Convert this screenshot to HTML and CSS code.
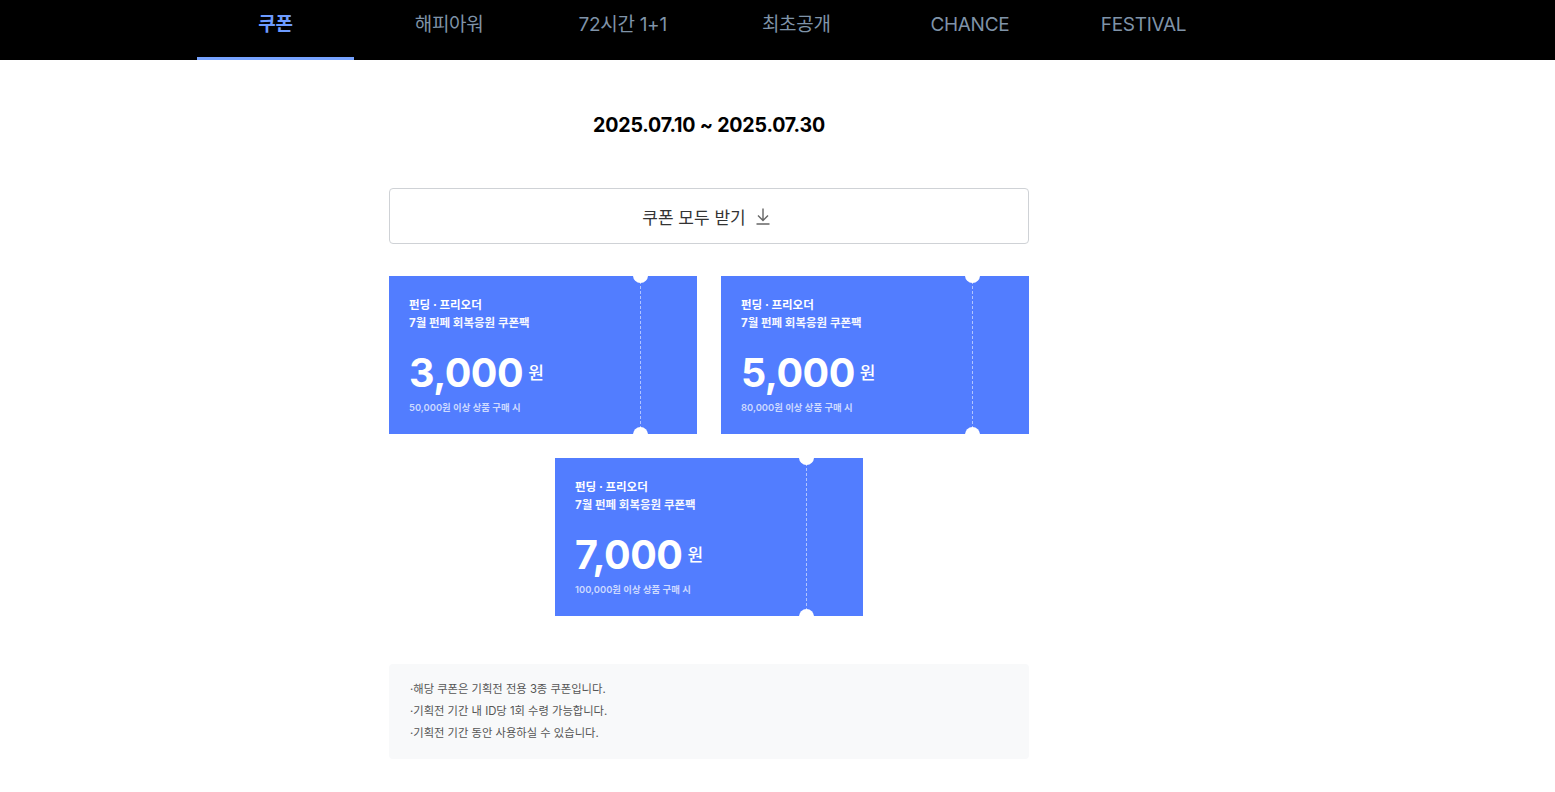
FILE: index.html
```html
<!DOCTYPE html>
<html lang="ko">
<head>
<meta charset="utf-8">
<link rel="stylesheet" href="styles.css">
</head>
<body>
<nav class="nav">
  <div class="nav-inner">
    <a class="nav-item active">쿠폰</a>
    <a class="nav-item">해피아워</a>
    <a class="nav-item">72시간 1+1</a>
    <a class="nav-item">최초공개</a>
    <a class="nav-item">CHANCE</a>
    <a class="nav-item">FESTIVAL</a>
  </div>
</nav>
<main class="main">
  <div class="content">
    <h2 class="date">2025.07.10 ~ 2025.07.30</h2>
    <button class="all-btn">쿠폰 모두 받기
      <svg class="dl" width="18" height="18" viewBox="0 0 18 18"><path d="M9 1.5v11.5M4 8.5l5 5 5-5M2.5 17h13" fill="none" stroke="#666" stroke-width="1.4"/></svg>
    </button>
    <div class="coupons">
      <div class="coupon">
        <div class="c-body">
          <div class="c-tag">펀딩 · 프리오더</div>
          <div class="c-title">7월 펀페 회복응원 쿠폰팩</div>
          <div class="c-amount"><span class="num">3,000</span><span class="won">원</span></div>
          <div class="c-cond">50,000원 이상 상품 구매 시</div>
        </div>
        <div class="c-stub"></div>
      </div>
      <div class="coupon">
        <div class="c-body">
          <div class="c-tag">펀딩 · 프리오더</div>
          <div class="c-title">7월 펀페 회복응원 쿠폰팩</div>
          <div class="c-amount"><span class="num">5,000</span><span class="won">원</span></div>
          <div class="c-cond">80,000원 이상 상품 구매 시</div>
        </div>
        <div class="c-stub"></div>
      </div>
      <div class="coupon">
        <div class="c-body">
          <div class="c-tag">펀딩 · 프리오더</div>
          <div class="c-title">7월 펀페 회복응원 쿠폰팩</div>
          <div class="c-amount"><span class="num">7,000</span><span class="won">원</span></div>
          <div class="c-cond">100,000원 이상 상품 구매 시</div>
        </div>
        <div class="c-stub"></div>
      </div>
    </div>
    <ul class="notice">
      <li>·해당 쿠폰은 기획전 전용 3종 쿠폰입니다.</li>
      <li>·기획전 기간 내 ID당 1회 수령 가능합니다.</li>
      <li>·기획전 기간 동안 사용하실 수 있습니다.</li>
    </ul>
  </div>
</main>
</body>
</html>
```

FILE: styles.css
```css
* { box-sizing: border-box; }
html, body { margin: 0; padding: 0; background: #fff; }
body {
  font-family: Inter, "Noto Sans CJK KR", "Noto Sans", sans-serif;
  width: 1555px;
}
.nav { background: #000; height: 60px; }
.nav-inner {
  width: 1022px;
  margin-left: 197px;
  display: flex;
  gap: 16.6px;
  height: 60px;
}
.nav-item {
  width: 157px;
  flex: none;
  height: 60px;
  display: flex;
  justify-content: center;
  padding-top: 12px;
  font-size: 19px;
  color: #7f93a8;
  letter-spacing: -0.3px;
  border-bottom: 3px solid transparent;
  line-height: 26px;
}
.nav-item.active {
  color: #6d9bff;
  font-weight: 700;
  border-bottom-color: #77a3ff;
}
.main { width: 1418px; display: flex; justify-content: center; }
.content { width: 640px; display: flex; flex-direction: column; align-items: center; }
.date {
  margin: 52px 0 0;
  font-size: 19.6px;
  line-height: 26px;
  font-weight: 700;
  color: #000;
  letter-spacing: -0.2px;
}
.all-btn {
  margin-top: 50px;
  width: 640px;
  height: 56px;
  border: 1px solid #cfd2d6;
  border-radius: 4px;
  background: #fff;
  font-family: inherit;
  font-size: 17px;
  color: #333;
  display: flex;
  align-items: center;
  justify-content: center;
  gap: 8px;
  padding: 0 4px 0 0;
}
.dl { margin-top: 0; }
.coupons {
  margin-top: 32px;
  width: 640px;
  display: flex;
  flex-wrap: wrap;
  justify-content: center;
  gap: 24px;
}
.coupon {
  width: 308px;
  height: 158px;
  background: #527dff;
  display: flex;
  position: relative;
  overflow: hidden;
}
.c-body {
  width: 252px;
  padding: 21px 0 0 20px;
  color: #fff;
  border-right: 1px dashed rgba(255,255,255,0.55);
  position: relative;
}
.c-body::before, .c-body::after {
  content: "";
  position: absolute;
  right: -8px;
  width: 15px;
  height: 15px;
  border-radius: 50%;
  background: #fff;
}
.c-body::before { top: -8px; }
.c-body::after { bottom: -8px; }
.c-stub { flex: 1; }
.c-tag { font-size: 11.5px; font-weight: 700; line-height: 16px; }
.c-title { font-size: 11.5px; font-weight: 700; line-height: 16px; margin-top: 2px; opacity: 0.95; }
.c-amount { margin-top: 18px; display: flex; align-items: baseline; height: 48px; }
.num { font-size: 39.5px; font-weight: 700; letter-spacing: -0.5px; line-height: 48px; }
.won { font-size: 17px; font-weight: 500; margin-left: 5px; position: relative; top: -8px; }
.c-cond { font-size: 9.4px; font-weight: 600; color: rgba(255,255,255,0.72); margin-top: 4px; line-height: 14px; }
.notice {
  list-style: none;
  margin: 48px 0 0;
  width: 640px;
  background: #f8f9fa;
  border-radius: 4px;
  padding: 14px 0 15px 21px;
}
.notice li {
  font-size: 11.3px;
  color: #555;
  line-height: 22px;
}
```
